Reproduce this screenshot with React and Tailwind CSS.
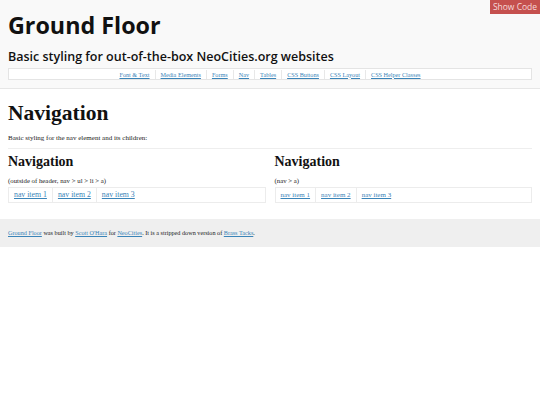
export default function App() {
  const serif = { fontFamily: '"Liberation Serif", "Times New Roman", serif' };
  const sans = { fontFamily: '"Open Sans", sans-serif' };
  const headerLinks = ["Font & Text", "Media Elements", "Forms", "Nav", "Tables", "CSS Buttons", "CSS Layout", "CSS Helper Classes"];
  const link = "text-[#3a84b8] underline";
  return (
    <div className="relative min-h-[405px] bg-white text-[#222]" style={serif}>
      <a className="absolute right-0 top-0 h-[14px] w-[50px] bg-[#c5504e] text-center text-[8.5px] leading-[14px] text-[#f6dada]" style={sans}>Show Code</a>
      <header className="border-b border-[#e6e6e6] bg-[#f9f9f9] px-[8px] pb-[8px] pt-[7px]">
        <h1 className="text-[23.3px] font-bold leading-[36px] text-[#111]" style={sans}>Ground Floor</h1>
        <h2 className="mt-[4px] text-[12.5px] font-semibold leading-[20px] text-[#111]" style={sans}>Basic styling for out-of-the-box NeoCities.org websites</h2>
        <nav className="mt-[1px] flex h-[12px] items-center justify-center border border-[#e4e4e4] bg-white">
          {headerLinks.map((t, i) => (
            <a key={t} className={`${link} px-[5px] text-[6.2px] leading-[9px] ${i > 0 ? "border-l border-[#e8e8e8]" : ""}`}>{t}</a>
          ))}
        </nav>
      </header>
      <main className="px-[8px] pt-[10px] pb-[16px]">
        <h1 className="text-[21.5px] font-bold leading-[28px] text-[#111]">Navigation</h1>
        <p className="mt-[6px] text-[7px] leading-[10px]">Basic styling for the nav element and its children:</p>
        <hr className="mt-[5px] border-0 border-t border-[#eeeeee]" />
        <div className="mt-[4px] grid grid-cols-2 gap-x-[9px]">
          <div>
            <h2 className="text-[14px] font-bold leading-[18px] text-[#111]">Navigation</h2>
            <p className="mt-[5px] text-[6.8px] leading-[10px]">(outside of header, nav &gt; ul &gt; li &gt; a)</p>
            <nav className="mt-[1px] flex h-[16px] items-center border border-[#ececec]">
              {["nav item 1", "nav item 2", "nav item 3"].map((t, i) => (
                <a key={t} className={`${link} px-[5px] text-[7.8px] leading-[14px] ${i > 0 ? "border-l border-[#ececec]" : ""}`}>{t}</a>
              ))}
            </nav>
          </div>
          <div>
            <h2 className="text-[14px] font-bold leading-[18px] text-[#111]">Navigation</h2>
            <p className="mt-[5px] text-[6.8px] leading-[10px]">(nav &gt; a)</p>
            <nav className="mt-[1px] flex h-[16px] items-center border border-[#ececec]">
              {["nav item 1", "nav item 2", "nav item 3"].map((t, i) => (
                <a key={t} className={`${link} px-[5px] text-[7px] leading-[14px] ${i > 0 ? "border-l border-[#ececec]" : ""}`}>{t}</a>
              ))}
            </nav>
          </div>
        </div>
      </main>
      <footer className="flex h-[28px] items-center bg-[#efefef] px-[8px] text-[6.2px]">
        <p>
          <a className={link}>Ground Floor</a> was built by <a className={link}>Scott O'Hara</a> for <a className={link}>NeoCities</a>. It is a stripped down version of <a className={link}>Brass Tacks</a>.
        </p>
      </footer>
    </div>
  );
}
